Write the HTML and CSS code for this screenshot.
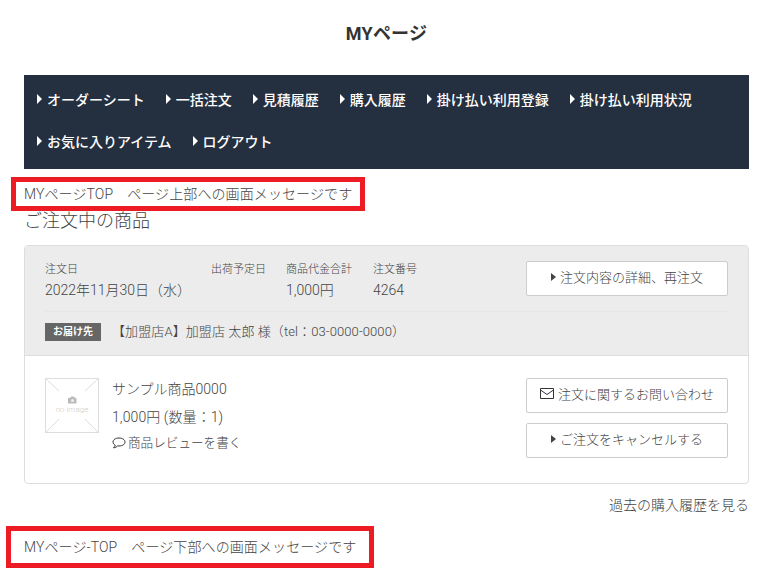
FILE: index.html
```html
<!DOCTYPE html>
<html lang="ja">
<head>
<meta charset="utf-8">
<title>MYページ</title>
<link rel="stylesheet" href="styles.css">
</head>
<body>
<div class="page">
  <h1 class="title">MYページ</h1>
  <nav class="nav">
    <a class="nav-item">オーダーシート</a>
    <a class="nav-item">一括注文</a>
    <a class="nav-item">見積履歴</a>
    <a class="nav-item">購入履歴</a>
    <a class="nav-item">掛け払い利用登録</a>
    <a class="nav-item">掛け払い利用状況</a>
    <a class="nav-item">お気に入りアイテム</a>
    <a class="nav-item">ログアウト</a>
  </nav>
  <p class="message msg-top">MYページTOP　ページ上部への画面メッセージです</p>
  <h2 class="section-title">ご注文中の商品</h2>
  <section class="card">
    <div class="card-head">
      <div class="summary">
        <dl class="col col-date"><dt>注文日</dt><dd>2022年11月30日（水）</dd></dl>
        <dl class="col col-ship"><dt>出荷予定日</dt><dd></dd></dl>
        <dl class="col col-total"><dt>商品代金合計</dt><dd>1,000円</dd></dl>
        <dl class="col col-num"><dt>注文番号</dt><dd>4264</dd></dl>
        <a class="btn btn-arrow">注文内容の詳細、再注文</a>
      </div>
      <div class="delivery">
        <span class="tag">お届け先</span>
        <span class="address">【加盟店A】加盟店 太郎 様（tel：03-0000-0000）</span>
      </div>
    </div>
    <div class="card-body">
      <div class="thumb">
        <svg class="thumb-lines" width="54" height="55" viewBox="0 0 54 55" aria-hidden="true">
          <path d="M0 0L14 13M54 0L40 13M0 55L14 41M54 55L40 41" fill="none" stroke="#ddd" stroke-width="1"/>
          <path d="M23 20h2l1-1.500h3l1 1.500h1.500v5.500h-8.500z" fill="#bbb"/>
          <circle cx="27.500" cy="22.500" r="1.500" fill="#eee"/>
        </svg>
        <span class="thumb-text">no image</span>
      </div>
      <div class="product">
        <p class="product-name">サンプル商品0000</p>
        <p class="product-price">1,000円 (数量：1)</p>
        <a class="review">
          <svg width="14" height="12" viewBox="0 0 14 12" aria-hidden="true"><path d="M7 1C3.700 1 1 2.700 1 5c0 1.300.9 2.400 2.200 3.100C3 9.200 2.300 10.200 1.500 10.800c1.700-.1 3.200-.9 4.200-1.900.4.100.9.100 1.300.1 3.300 0 6-1.700 6-4S10.300 1 7 1z" fill="none" stroke="#333" stroke-width="1"/></svg>
          商品レビューを書く
        </a>
      </div>
      <div class="actions">
        <a class="btn">
          <svg width="14" height="11" viewBox="0 0 14 11" aria-hidden="true"><path d="M.5.500h13v10H.5zM.5 2l6.500 4.500L13.500 2" fill="none" stroke="#333" stroke-width="1"/></svg>
          注文に関するお問い合わせ
        </a>
        <a class="btn btn-arrow">ご注文をキャンセルする</a>
      </div>
    </div>
  </section>
  <div class="history"><a>過去の購入履歴を見る</a></div>
  <p class="message msg-bottom">MYページ-TOP　ページ下部への画面メッセージです</p>
  <div class="mark mark-top"></div>
  <div class="mark mark-bottom"></div>
</div>
</body>
</html>
```
FILE: styles.css
```css
* { box-sizing: border-box; }
html, body { margin: 0; padding: 0; background: #fff; }
body {
  font-family: Roboto, "Noto Sans CJK JP", sans-serif;
  color: #444;
  font-size: 14px;
  font-weight: 300;
  overflow: hidden;
  height: 586px;
}
.page { position: relative; padding: 0 35px 0 24px; }
.title {
  margin: 0;
  height: 75px;
  padding-top: 21px;
  font-size: 18px;
  line-height: 26px;
  font-weight: 700;
  text-align: center;
  letter-spacing: 0.2px;
  color: #333;
}
.nav {
  display: flex;
  flex-wrap: wrap;
  height: 94px;
  padding: 3px 13px;
  background: #242f3f;
  align-content: flex-start;
}
.nav-item {
  display: flex;
  align-items: center;
  height: 42px;
  margin-right: 21px;
  color: #fff;
  font-size: 14px;
  font-weight: 500;
}
.nav-item::before, .btn-arrow::before {
  content: "";
  display: inline-block;
  border-style: solid;
  border-color: transparent transparent transparent currentColor;
  border-width: 5px 0 5px 5px;
  margin-right: 5px;
}
.btn-arrow::before { border-width: 4px 0 4px 5px; margin-right: 4px; }
.message { margin: 0; font-size: 14px; line-height: 20px; letter-spacing: 0.1px; }
.msg-top { margin-top: 15px; }
.section-title {
  margin: 5px 0 12px;
  font-size: 18px;
  line-height: 24px;
  font-weight: 300;
}
.card { border: 1px solid #ddd; border-radius: 4px; height: 239px; }
.card-head {
  height: 110px;
  padding: 16px 20px 0;
  background: #ececec;
  border-bottom: 1px solid #ddd;
  border-radius: 3px 3px 0 0;
}
.summary {
  display: flex;
  height: 50px;
  border-bottom: 1px solid #e6e6e6;
}
.col { margin: 0; }
.col dt { font-size: 11px; line-height: 16px; }
.col dd { margin: 2px 0 0; font-size: 14px; line-height: 20px; }
.col-date { width: 166px; }
.col-ship { width: 75px; }
.col-total { width: 87px; }
.col-num { width: 153px; }
.summary .btn { margin-top: -1px; }
.btn {
  display: flex;
  align-items: center;
  justify-content: center;
  width: 202px;
  height: 35px;
  padding-bottom: 4px;
  background: #fff;
  border: 1px solid #ccc;
  border-radius: 2px;
  font-size: 13px;
}
.btn svg { margin-right: 4px; }
.delivery { display: flex; align-items: center; margin-top: 11px; }
.tag {
  width: 56px;
  height: 18px;
  background: #666;
  color: #fff;
  font-size: 10px;
  line-height: 18px;
  font-weight: 700;
  text-align: center;
}
.address { margin-left: 11px; font-size: 13px; line-height: 18px; letter-spacing: 0.1px; }
.card-body { display: flex; padding: 22px 20px 0; }
.thumb {
  position: relative;
  width: 54px;
  height: 55px;
  border: 1px solid #ddd;
  flex: none;
}
.thumb-lines { position: absolute; left: -1px; top: -1px; }
.thumb-text {
  position: absolute;
  left: 0;
  right: 0;
  top: 25px;
  text-align: center;
  font-size: 8px;
  line-height: 12px;
  color: #ccc;
}
.product { margin-left: 13px; flex: 1; }
.product-name { margin: 0; font-size: 14px; line-height: 22px; }
.product-price { margin: 6px 0 0; font-size: 14px; line-height: 22px; letter-spacing: 0.1px; }
.review {
  display: flex;
  align-items: center;
  margin-top: 6px;
  font-size: 12.6px;
  line-height: 18px;
}
.review svg { margin-right: 2px; }
.actions { display: flex; flex-direction: column; gap: 10px; }
.history { margin-top: 11px; text-align: right; font-size: 14px; line-height: 20px; }
.msg-bottom { margin-top: 22px; }
.mark { position: absolute; border: 5px solid #ed1c24; }
.mark-top { left: 11px; top: 177px; width: 354px; height: 34px; }
.mark-bottom { left: 6px; top: 526px; width: 368px; height: 42px; }
```
